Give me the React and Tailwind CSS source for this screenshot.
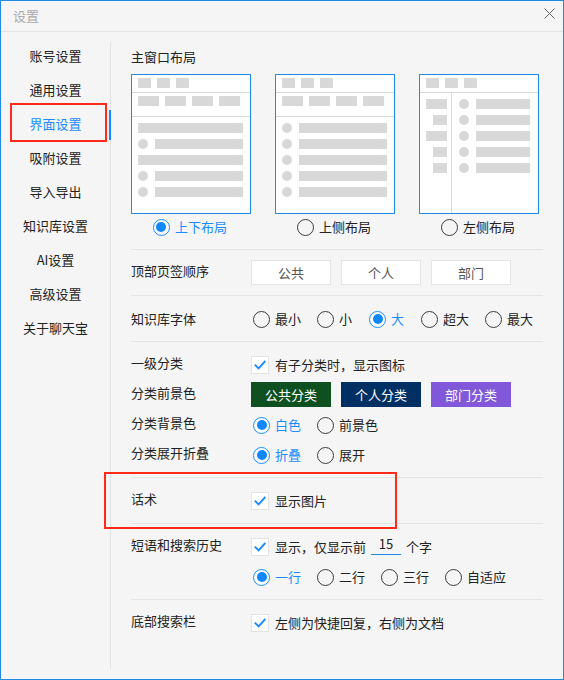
const font = { fontFamily: '"Noto Sans CJK SC", "Microsoft YaHei", sans-serif' }

const navItems = ['账号设置', '通用设置', '界面设置', '吸附设置', '导入导出', '知识库设置', 'AI设置', '高级设置', '关于聊天宝']

function Radio({ label, checked }) {
  return (
    <div className="flex items-center h-5">
      <span className={`ml-[2px] w-[17px] h-[17px] rounded-full border-[1.5px] flex items-center justify-center ${checked ? 'border-[#1a8cff] bg-white' : 'border-[#3c3c3c]'}`}>
        {checked && <span className="w-[10px] h-[10px] rounded-full bg-[#0f88ff]" />}
      </span>
      <span className={`ml-[5px] min-w-[14px] ${checked ? 'text-[#1a8cff]' : 'text-[#222]'}`}>{label}</span>
    </div>
  )
}

function Checkbox({ children }) {
  return (
    <div className="flex items-center h-[18px]">
      <span className="w-[18px] h-[18px] border border-[#e2e2e2] bg-white flex items-center justify-center">
        <svg width="12" height="10" viewBox="0 0 12 10" fill="none">
          <path d="M0.8 4.6 L4.6 8.4 L11.4 1" stroke="#1a8cff" strokeWidth="2" />
        </svg>
      </span>
      <span className="ml-[6px] flex items-center text-[#222]">{children}</span>
    </div>
  )
}

function Bar({ w, round }) {
  return <span className={`block h-[10px] bg-[#d8d8d8] ${round ? 'rounded-full' : ''} ${w}`} />
}

function TopBars() {
  return (
    <div className="h-[18px] pt-[3px] pl-[6px] flex gap-[6px] border-b border-[#d8d8d8]">
      <Bar w="w-[13px]" />
      <Bar w="w-[13px]" />
      <Bar w="w-[13px]" />
    </div>
  )
}

function ListRow({ full }) {
  return full ? (
    <Bar w="w-[105px]" />
  ) : (
    <div className="flex gap-[7px]">
      <Bar w="w-[10px]" round />
      <Bar w="w-[88px]" />
    </div>
  )
}

function TopLayout({ rows }) {
  return (
    <div className="w-[120px] h-[140px] border border-[#1e88e5] bg-white">
      <TopBars />
      <div className="h-[24px] pt-[3px] pl-[6px] flex gap-[6px] border-b border-[#d8d8d8]">
        <Bar w="w-[21px]" />
        <Bar w="w-[21px]" />
        <Bar w="w-[21px]" />
        <Bar w="w-[21px]" />
      </div>
      <div className="pt-[6px] pl-[6px] flex flex-col gap-[6px]">
        {rows.map((full, i) => (
          <ListRow key={i} full={full} />
        ))}
      </div>
    </div>
  )
}

function LeftLayout() {
  const left = ['w-[21px]', 'w-[14px]', 'w-[21px]', 'w-[14px]', 'w-[14px]']
  return (
    <div className="w-[120px] h-[140px] border border-[#1e88e5] bg-white flex flex-col">
      <TopBars />
      <div className="flex flex-1">
        <div className="w-[32px] border-r border-[#d8d8d8] pt-[6px] pr-[4px] flex flex-col items-end gap-[6px]">
          {left.map((w, i) => (
            <Bar key={i} w={w} />
          ))}
        </div>
        <div className="pt-[6px] pl-[7px] flex flex-col gap-[6px]">
          {left.map((_, i) => (
            <div key={i} className="flex gap-[7px]">
              <Bar w="w-[10px]" round />
              <Bar w="w-[54px]" />
            </div>
          ))}
        </div>
      </div>
    </div>
  )
}

function LayoutOption({ label, checked, children }) {
  return (
    <div className="w-[120px]">
      {children}
      <div className="mt-[3px] flex justify-center pr-[4px]">
        <Radio label={label} checked={checked} />
      </div>
    </div>
  )
}

function Row({ label, className, labelClass, children }) {
  return (
    <div className={`flex items-center ${className ?? ''}`}>
      <div className={`w-[120px] shrink-0 h-[18px] leading-[18px] text-[#222] ${labelClass ?? '-translate-y-[2px]'}`}>{label}</div>
      {children}
    </div>
  )
}

function Section({ h, children }) {
  return <div className={`border-t border-[#e4e4e4] ${h}`}>{children}</div>
}

export default function App() {
  return (
    <div className="relative w-[564px] h-[680px] border border-[#1e88e5] bg-[#f5f5f5] text-[13px] leading-5 overflow-hidden" style={font}>
      <div className="h-[31px] border-b border-[#e2e2e2] flex items-center justify-between pl-[12px] pr-[8px]">
        <span className="text-[#aaa]">设置</span>
        <svg width="11" height="11" viewBox="0 0 11 11" className="mt-[-6px]">
          <path d="M0.5 0.5 L10.5 10.5 M10.5 0.5 L0.5 10.5" stroke="#666" strokeWidth="1" />
        </svg>
      </div>

      <div className="flex">
        <nav className="w-[110px] h-[627px] mt-[10px] border-r border-[#e2e2e2] shrink-0">
          <div className="-mt-[3px] text-center">
            {navItems.map((item) => (
              <div key={item} className={`relative h-[34px] leading-[34px] ${item === '界面设置' ? 'text-[#1a8cff]' : 'text-[#222]'}`}>
                {item}
                {item === '界面设置' && <span className="absolute right-[-1px] top-[3px] w-[2px] h-[30px] bg-[#0f88ff]" />}
              </div>
            ))}
          </div>
        </nav>

        <main className="flex-1 pl-[20px] pr-[20px] pt-[15px]">
          <div className="text-[#222]">主窗口布局</div>
          <div className="mt-[7px] flex gap-[24px]">
            <LayoutOption label="上下布局" checked>
              <TopLayout rows={[true, false, true, false, false]} />
            </LayoutOption>
            <LayoutOption label="上侧布局">
              <TopLayout rows={[false, false, false, false, false]} />
            </LayoutOption>
            <LayoutOption label="左侧布局">
              <LeftLayout />
            </LayoutOption>
          </div>

          <div className="mt-[12px]">
            <Section h="h-[46px]">
              <Row label="顶部页签顺序" className="pt-[10px]">
                <div className="flex gap-[10px]">
                  {['公共', '个人', '部门'].map((t) => (
                    <div key={t} className="w-[80px] h-[25px] border border-[#e4e4e4] bg-white flex items-center justify-center text-[#555]">{t}</div>
                  ))}
                </div>
              </Row>
            </Section>
            <Section h="h-[46px]">
              <Row label="知识库字体" className="pt-[13px]" labelClass="translate-y-0">
                <div className="flex gap-[14px]">
                  <Radio label="最小" />
                  <Radio label="小" />
                  <Radio label="大" checked />
                  <Radio label="超大" />
                  <Radio label="最大" />
                </div>
              </Row>
            </Section>
            <Section h="h-[136px]">
              <Row label="一级分类" className="pt-[14px]">
                <Checkbox>有子分类时，显示图标</Checkbox>
              </Row>
              <Row label="分类前景色" className="mt-[8px]">
                <div className="flex gap-[10px] text-white">
                  <div className="w-[80px] h-[25px] bg-[#0f5021] flex items-center justify-center">公共分类</div>
                  <div className="w-[80px] h-[25px] bg-[#003063] flex items-center justify-center">个人分类</div>
                  <div className="w-[80px] h-[25px] bg-[#8058d9] flex items-center justify-center">部门分类</div>
                </div>
              </Row>
              <Row label="分类背景色" className="mt-[8px]">
                <div className="flex gap-[14px]">
                  <Radio label="白色" checked />
                  <Radio label="前景色" />
                </div>
              </Row>
              <Row label="分类展开折叠" className="mt-[10px]">
                <div className="flex gap-[14px]">
                  <Radio label="折叠" checked />
                  <Radio label="展开" />
                </div>
              </Row>
            </Section>
            <Section h="h-[46px]">
              <Row label="话术" className="pt-[14px]">
                <Checkbox>显示图片</Checkbox>
              </Row>
            </Section>
            <Section h="h-[76px]">
              <Row label="短语和搜索历史" className="pt-[14px]">
                <Checkbox>
                  显示，仅显示前
                  <span className="ml-[5px] w-[30px] h-[19px] leading-[16px] border-b border-[#1e88e5] text-center mt-[-3px]">15</span>
                  <span className="ml-[5px]">个字</span>
                </Checkbox>
              </Row>
              <div className="mt-[11px] ml-[120px] flex gap-[14px]">
                <Radio label="一行" checked />
                <Radio label="二行" />
                <Radio label="三行" />
                <Radio label="自适应" />
              </div>
            </Section>
            <Section h="h-[60px]">
              <Row label="底部搜索栏" className="pt-[14px]">
                <Checkbox>左侧为快捷回复，右侧为文档</Checkbox>
              </Row>
            </Section>
          </div>
        </main>
      </div>

      <div className="absolute left-[9px] top-[102px] w-[97px] h-[39px] border-2 border-[#ff2a1a]" />
      <div className="absolute left-[103px] top-[471px] w-[293px] h-[57px] border-2 border-[#ff2a1a]" />
    </div>
  )
}
